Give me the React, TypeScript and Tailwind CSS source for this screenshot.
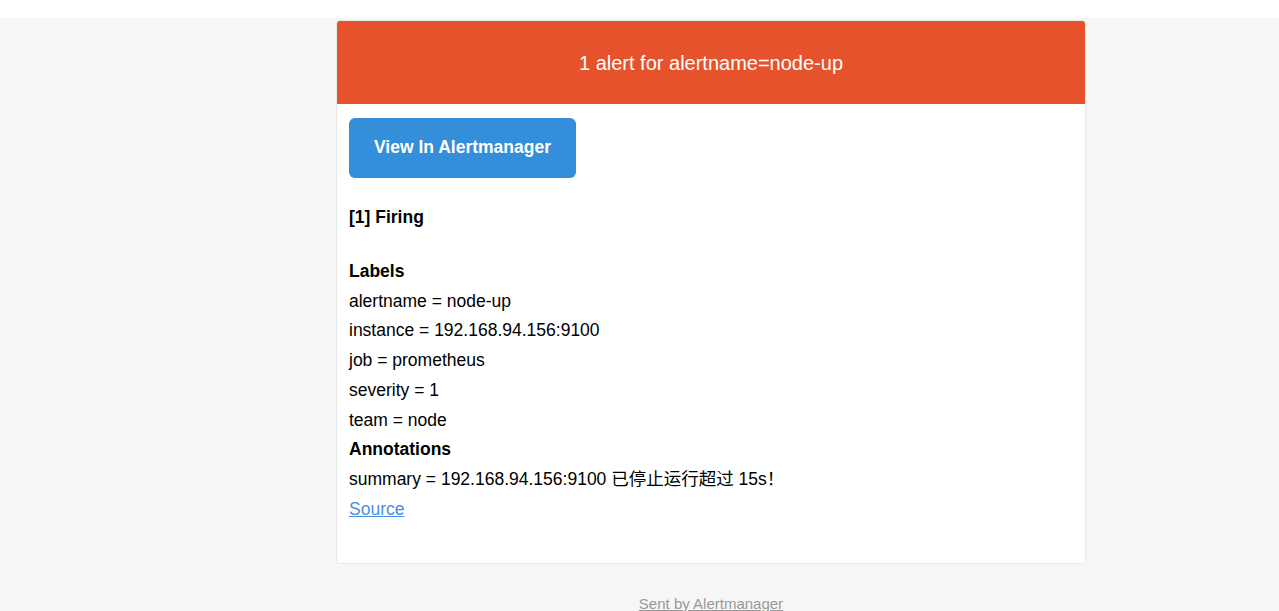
// Alertmanager notification email, rendered at 125% zoom

const FONT = "font-['Liberation_Sans','Noto_Sans_CJK_SC',Arial,sans-serif]";

const LABELS: [string, string][] = [
  ["alertname", "node-up"],
  ["instance", "192.168.94.156:9100"],
  ["job", "prometheus"],
  ["severity", "1"],
  ["team", "node"],
];

const ANNOTATIONS: [string, string][] = [["summary", "192.168.94.156:9100 已停止运行超过 15s！"]];

export default function App() {
  return (
    <div className={`min-h-screen bg-[#f6f6f6] text-black ${FONT}`}>
      <div className="h-[18px] bg-white" />

      <div className="pl-[336px] pt-[2px]">
        {/* ── Card ─────────────────────────────────────────── */}
        <div className="w-[750px] bg-white border border-[#e9e9e9] rounded-[4px]">
          <div className="bg-[#E6522C] text-white text-[20px] leading-[33px] pt-[26px] pb-[24px] text-center rounded-t-[3px]">
            1 alert for alertname=node-up
          </div>

          <div className="px-[12px] pt-[14px] pb-[13px] text-[17.5px] leading-[29.75px]">
            <div className="pb-[25px]">
              <a
                href="#"
                className="inline-block h-[60px] px-[25px] leading-[59px] bg-[#348eda] text-white font-bold rounded-[6px]"
              >
                View In Alertmanager
              </a>
            </div>

            <div className="pb-[24px]">
              <strong>[1] Firing</strong>
            </div>

            <div className="pb-[25px]">
              <strong>Labels</strong>
              {LABELS.map(([k, v]) => (
                <div key={k}>
                  {k} = {v}
                </div>
              ))}
              <strong className="block">Annotations</strong>
              {ANNOTATIONS.map(([k, v]) => (
                <div key={k}>
                  {k} = {v}
                </div>
              ))}
              <a href="#" className="text-[#4a90e2] underline">
                Source
              </a>
            </div>
          </div>
        </div>

        {/* ── Footer ───────────────────────────────────────── */}
        <div className="w-[750px] pt-[28px] text-center text-[15px] leading-[24px]">
          <a href="#" className="text-[#999] underline">
            Sent by Alertmanager
          </a>
        </div>
      </div>
    </div>
  );
}
